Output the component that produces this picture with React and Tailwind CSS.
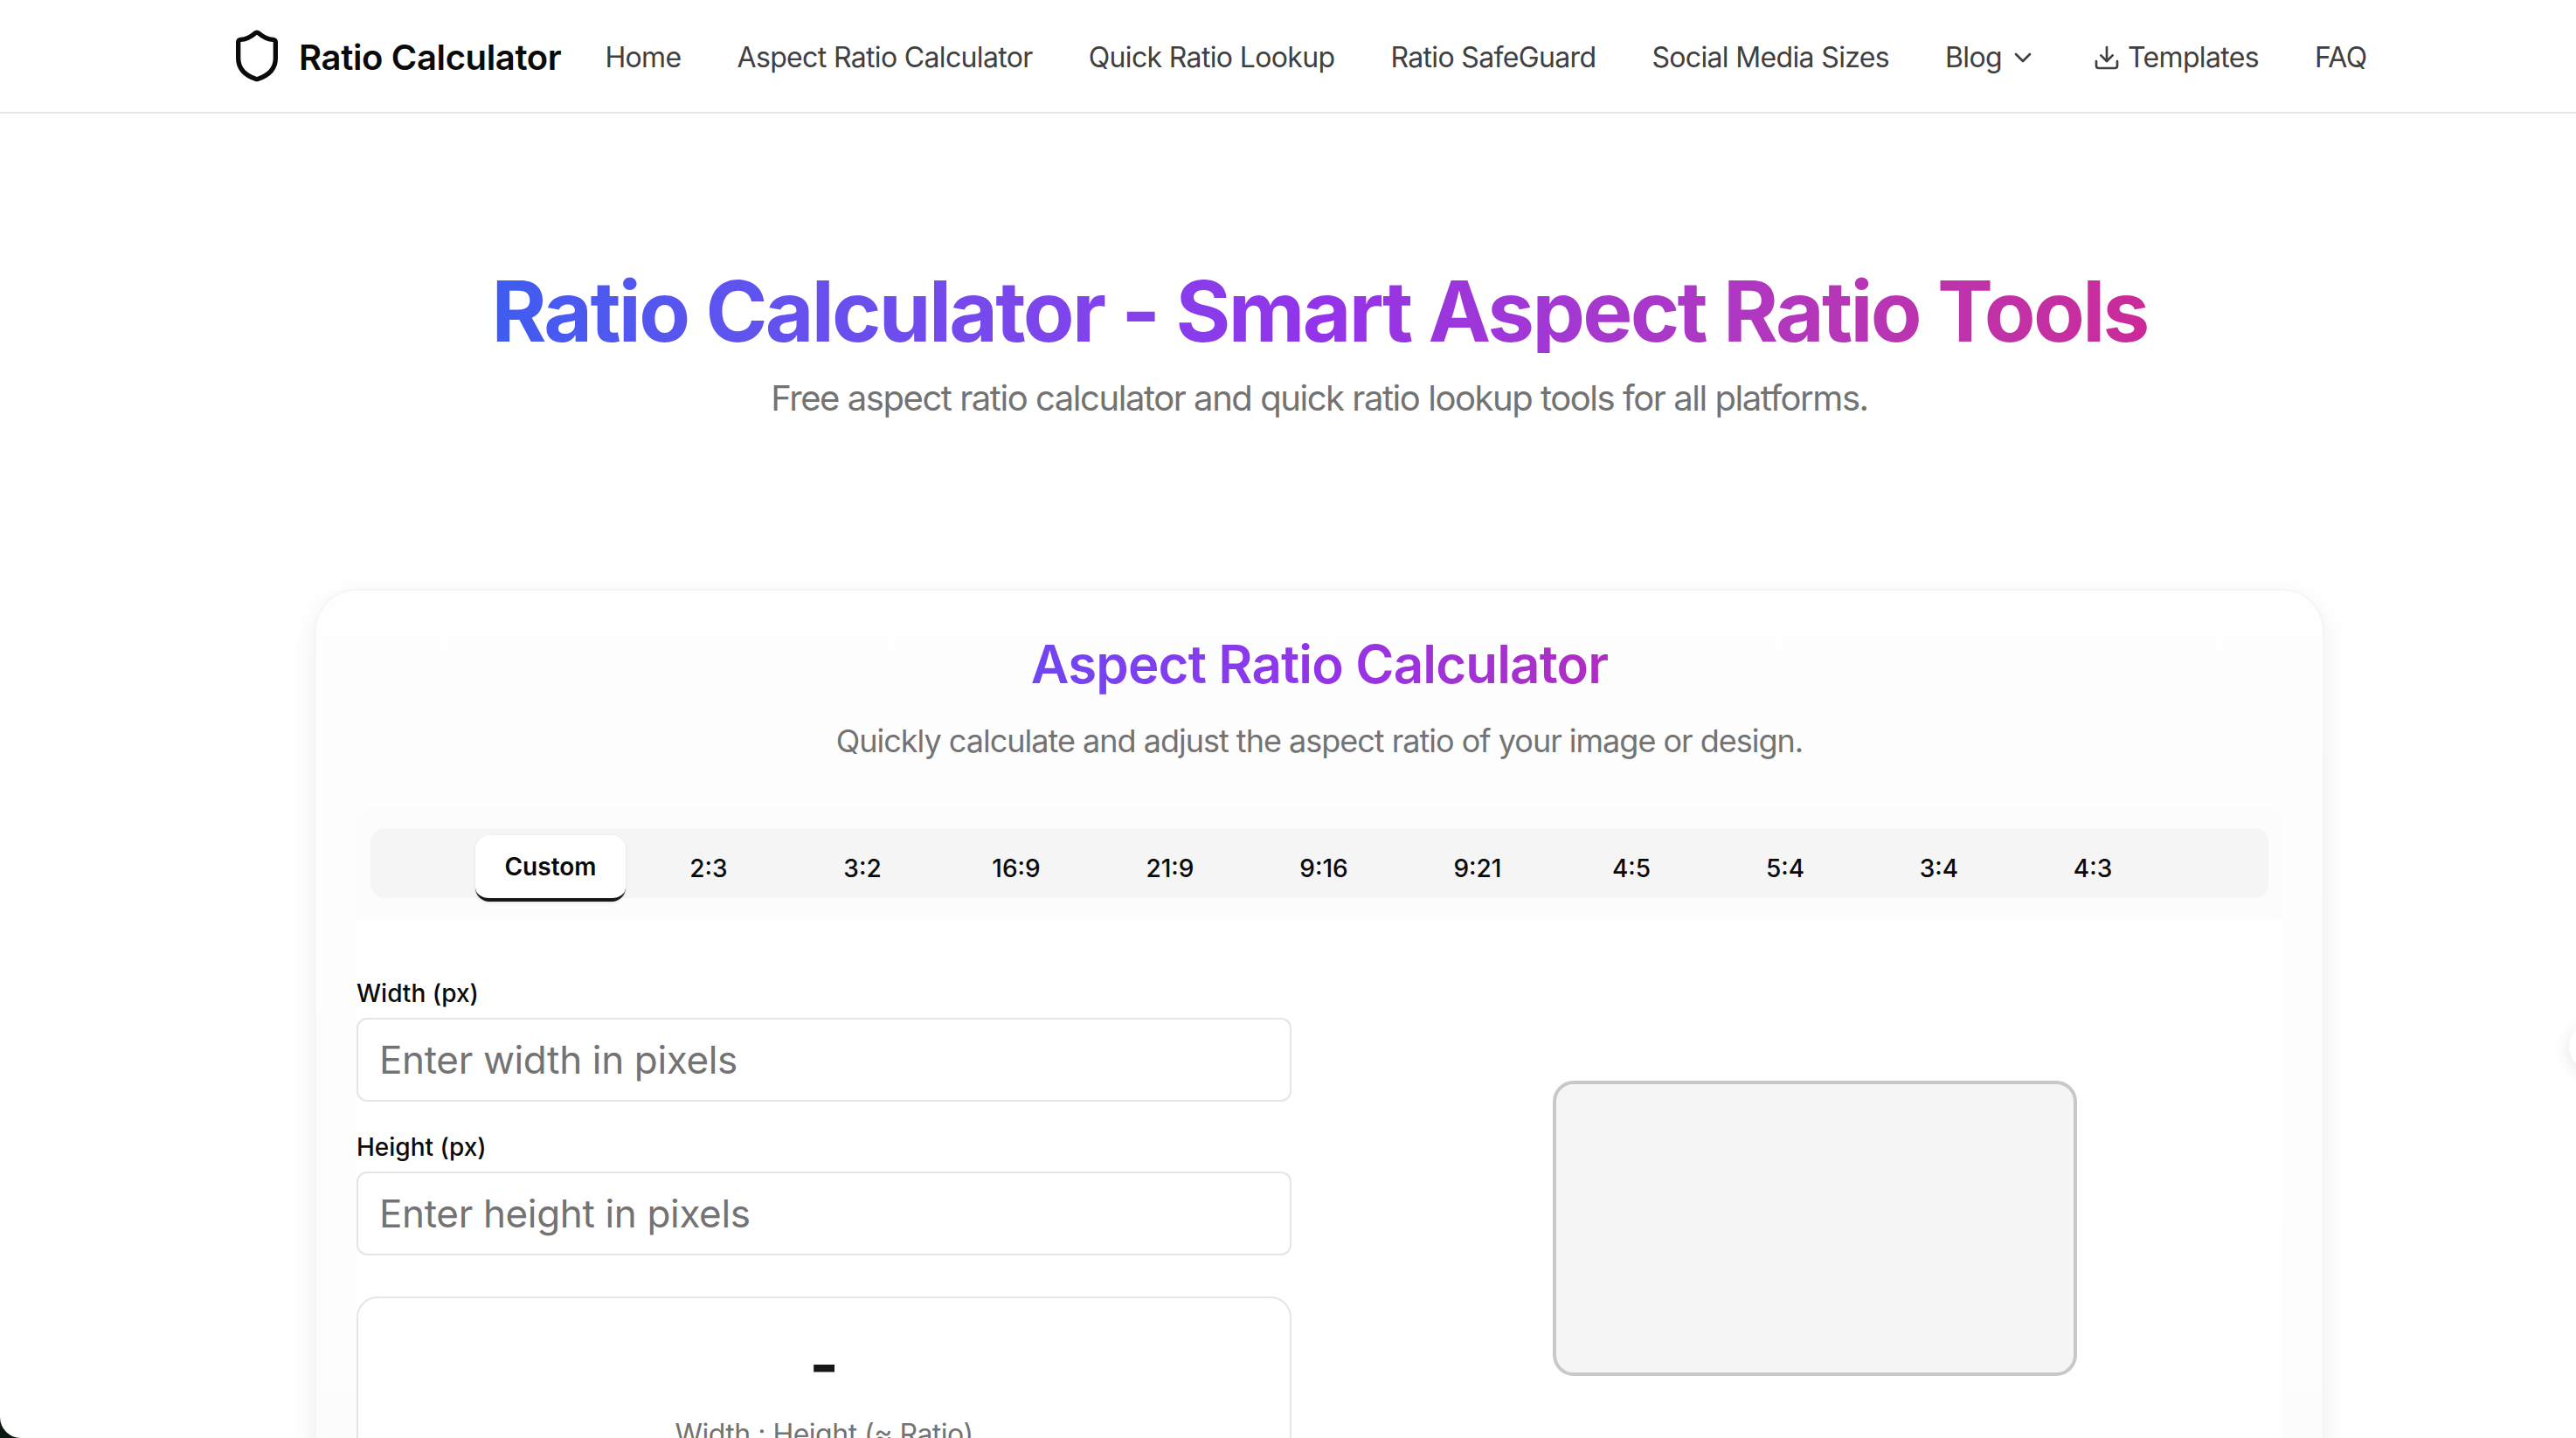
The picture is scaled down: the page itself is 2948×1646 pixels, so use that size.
import React from "react";
import { ChevronDown, Download, Shield } from "lucide-react";

const navLinks = ["Home", "Aspect Ratio Calculator", "Quick Ratio Lookup", "Ratio SafeGuard", "Social Media Sizes"];
const ratios = ["2:3", "3:2", "16:9", "21:9", "9:16", "9:21", "4:5", "5:4", "3:4", "4:3"];

const Header = () => (
  <header className="h-[130px] border-b-2 border-[#e5e5e5] pl-[262px] flex items-center">
    <div className="flex items-center gap-4 mr-[50px]">
      <Shield className="w-16 h-16 text-[#0a0a0a]" />
      <span className="mt-[3px] text-[40px] font-semibold text-[#0a0a0a] tracking-[-0.35px]">Ratio Calculator</span>
    </div>
    <nav className="mt-[3px] flex items-center gap-16 text-[32px] text-[#404040] tracking-[-0.65px]">
      {navLinks.map((link) => (
        <a key={link}>{link}</a>
      ))}
      <a className="flex items-center gap-2">
        Blog
        <ChevronDown className="w-8 h-8" />
      </a>
      <a className="flex items-center gap-2">
        <Download className="w-8 h-8" />
        Templates
      </a>
      <a>FAQ</a>
    </nav>
  </header>
);

const Field = ({ label, placeholder }) => (
  <div>
    <label className="block text-[28px] leading-[28px] font-medium text-[#0a0a0a] mb-[14px]">{label}</label>
    <input
      placeholder={placeholder}
      className="w-full h-24 px-6 border-2 border-[#e5e5e5] rounded-xl bg-white text-[44px] tracking-[-0.35px] placeholder:text-[#737373]"
    />
  </div>
);

const Calculator = () => (
  <section className="mt-[190px] border-2 border-[#f5f5f5] rounded-[48px] bg-gradient-to-b from-[#fefefe] to-[#fbfcfb] pt-12 px-[46px] pb-12 shadow-[0_10px_30px_rgba(0,0,0,0.07)]">
    <div className="text-center">
      <h2 className="inline-block text-[60px] leading-[72px] font-semibold tracking-[-0.82px] bg-gradient-to-r from-[#6f46f2] via-[#9333ea] to-[#b02cc0] bg-clip-text text-transparent">
        Aspect Ratio Calculator
      </h2>
      <p className="mt-6 text-[36px] leading-[56px] text-[#737373] tracking-[-1px]">Quickly calculate and adjust the aspect ratio of your image or design.</p>
    </div>

    <div className="mt-12 bg-[#fcfcfc] rounded-t-3xl px-4 pt-6 pb-6">
      <div className="h-20 rounded-2xl bg-[#f5f5f5] flex justify-center gap-1 pt-2">
        <button className="w-[172px] h-[76px] rounded-2xl bg-white border-b-4 border-[#171717] text-[28px] font-semibold text-[#0a0a0a] shadow-sm">
          Custom
        </button>
        {ratios.map((ratio) => (
          <button key={ratio} className="w-[172px] h-[76px] pl-[10px] text-[28px] font-medium text-[#0a0a0a]">
            {ratio}
          </button>
        ))}
      </div>
    </div>

    <div className="bg-white pt-[71px] grid grid-cols-2 gap-16">
      <div>
        <Field label="Width (px)" placeholder="Enter width in pixels" />
        <div className="mt-[38px]">
          <Field label="Height (px)" placeholder="Enter height in pixels" />
        </div>
        <div className="mt-[47px] h-[400px] border-2 border-[#e5e5e5] rounded-3xl bg-white text-center pt-9">
          <div className="text-[72px] leading-[80px] font-bold text-[#171717]">-</div>
          <div className="mt-4 text-[32px] leading-[48px] text-[#737373] tracking-[-0.5px]">Width : Height (≈ Ratio)</div>
        </div>
      </div>
      <div className="pt-[114px] flex justify-center">
        <div className="w-[600px] h-[338px] border-4 border-[#c8c8c8] rounded-3xl bg-[#f5f5f5]" />
      </div>
    </div>
  </section>
);

const App = () => (
  <div className="h-[1646px] bg-[#0b1a10] overflow-hidden [font-family:Inter,sans-serif]">
    <div className="relative h-full bg-white rounded-bl-[24px] overflow-hidden">
      <Header />
      <main className="ml-[360px] w-[2300px]">
        <div className="pt-[178px] text-center">
          <h1 className="inline-block text-[96px] leading-[96px] font-bold tracking-[-2.7px] bg-gradient-to-r from-[#3e5cf0] via-[#9333ea] to-[#cb2a98] bg-clip-text text-transparent">
            Ratio Calculator - Smart Aspect Ratio Tools
          </h1>
          <p className="mt-6 text-[40px] leading-[56px] text-[#737373] tracking-[-1.45px]">Free aspect ratio calculator and quick ratio lookup tools for all platforms.</p>
        </div>
        <Calculator />
      </main>
      {/* floating widget peeking in from the right edge */}
      <div className="absolute top-[1170px] right-[-48px] w-14 h-14 rounded-full bg-white shadow-[0_4px_20px_rgba(0,0,0,0.1)]" />
    </div>
  </div>
);

export default App;
